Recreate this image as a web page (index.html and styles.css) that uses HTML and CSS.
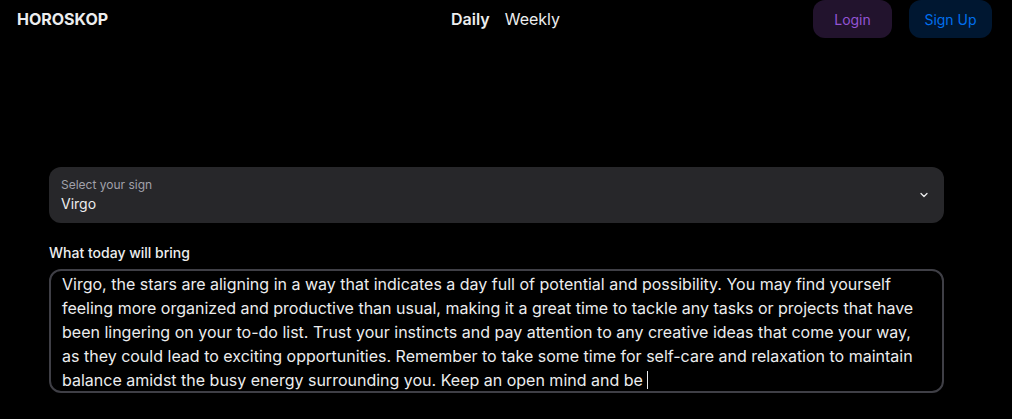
FILE: index.html
```html
<!DOCTYPE html>
<html lang="en">
<head>
<meta charset="utf-8">
<title>Horoskop</title>
<link rel="stylesheet" href="styles.css">
</head>
<body>
<header class="nav">
  <div class="brand">HOROSKOP</div>
  <nav class="links">
    <a class="link active" href="#">Daily</a>
    <a class="link" href="#">Weekly</a>
  </nav>
  <div class="actions">
    <button class="btn btn-login">Login</button>
    <button class="btn btn-signup">Sign Up</button>
  </div>
</header>
<main class="main">
  <div class="select">
    <div class="select-text">
      <span class="select-label">Select your sign</span>
      <span class="select-value">Virgo</span>
    </div>
    <svg class="chev" width="12" height="12" viewBox="0 0 24 24" fill="none" stroke="currentColor" stroke-width="2.5" stroke-linecap="round" stroke-linejoin="round"><path d="M6 9l6 6 6-6"/></svg>
  </div>
  <label class="field-label">What today will bring</label>
  <div class="textarea">Virgo, the stars are aligning in a way that indicates a day full of potential and possibility. You may find yourself<br>feeling more organized and productive than usual, making it a great time to tackle any tasks or projects that have<br>been lingering on your to-do list. Trust your instincts and pay attention to any creative ideas that come your way,<br>as they could lead to exciting opportunities. Remember to take some time for self-care and relaxation to maintain<br>balance amidst the busy energy surrounding you. Keep an open mind and be <span class="caret"></span></div>
</main>
</body>
</html>
```
FILE: styles.css
```css
* { box-sizing: border-box; }
html, body { margin: 0; padding: 0; background: #000; }
body {
  font-family: Inter, "Noto Sans", sans-serif;
  color: #ecedee;
  width: 1012px;
  height: 419px;
  overflow: hidden;
}
.nav {
  height: 38px;
  display: flex;
  align-items: center;
  justify-content: space-between;
  padding: 0 20px 0 17px;
  position: relative;
}
.brand {
  font-weight: 700;
  font-size: 16px;
  color: #ecedee;
}
.links {
  position: absolute;
  left: 451px;
  top: 0;
  height: 38px;
  display: flex;
  align-items: center;
  gap: 15px;
}
.link {
  color: #ecedee;
  text-decoration: none;
  font-size: 16px;
}
.link.active { font-weight: 600; }
.actions { display: flex; gap: 17px; }
.btn {
  font-family: inherit;
  font-size: 14px;
  border: none;
  border-radius: 12px;
  height: 38px;
  padding: 0;
  white-space: nowrap;
  cursor: pointer;
}
.btn-login { background: #22132d; color: #9353d3; width: 79px; }
.btn-signup { background: #001731; color: #006fee; width: 83px; }
.main {
  padding: 129px 68px 0 49px;
}
.select {
  background: #27272a;
  border-radius: 12px;
  height: 56px;
  display: flex;
  align-items: center;
  justify-content: space-between;
  padding: 0 14px 0 12px;
}
.select-text { display: flex; flex-direction: column; }
.select-label { font-size: 12px; color: #a1a1aa; line-height: 16px; }
.select-value { font-size: 14px; color: #ecedee; line-height: 20px; margin-top: 1px; }
.chev { color: #ecedee; }
.field-label {
  display: block;
  margin-top: 20px;
  font-size: 14px;
  font-weight: 500;
  line-height: 20px;
  color: #ecedee;
}
.textarea {
  margin-top: 6px;
  border: 2px solid #3f3f46;
  border-radius: 12px;
  padding: 1px 0 2px 11px;
  height: 124px;
  font-size: 16px;
  line-height: 24px;
  color: #ecedee;
  white-space: nowrap;
  overflow: hidden;
}
.caret {
  display: inline-block;
  width: 0;
  height: 18px;
  border-left: 1.5px solid #ecedee;
  vertical-align: -3px;
}
```
